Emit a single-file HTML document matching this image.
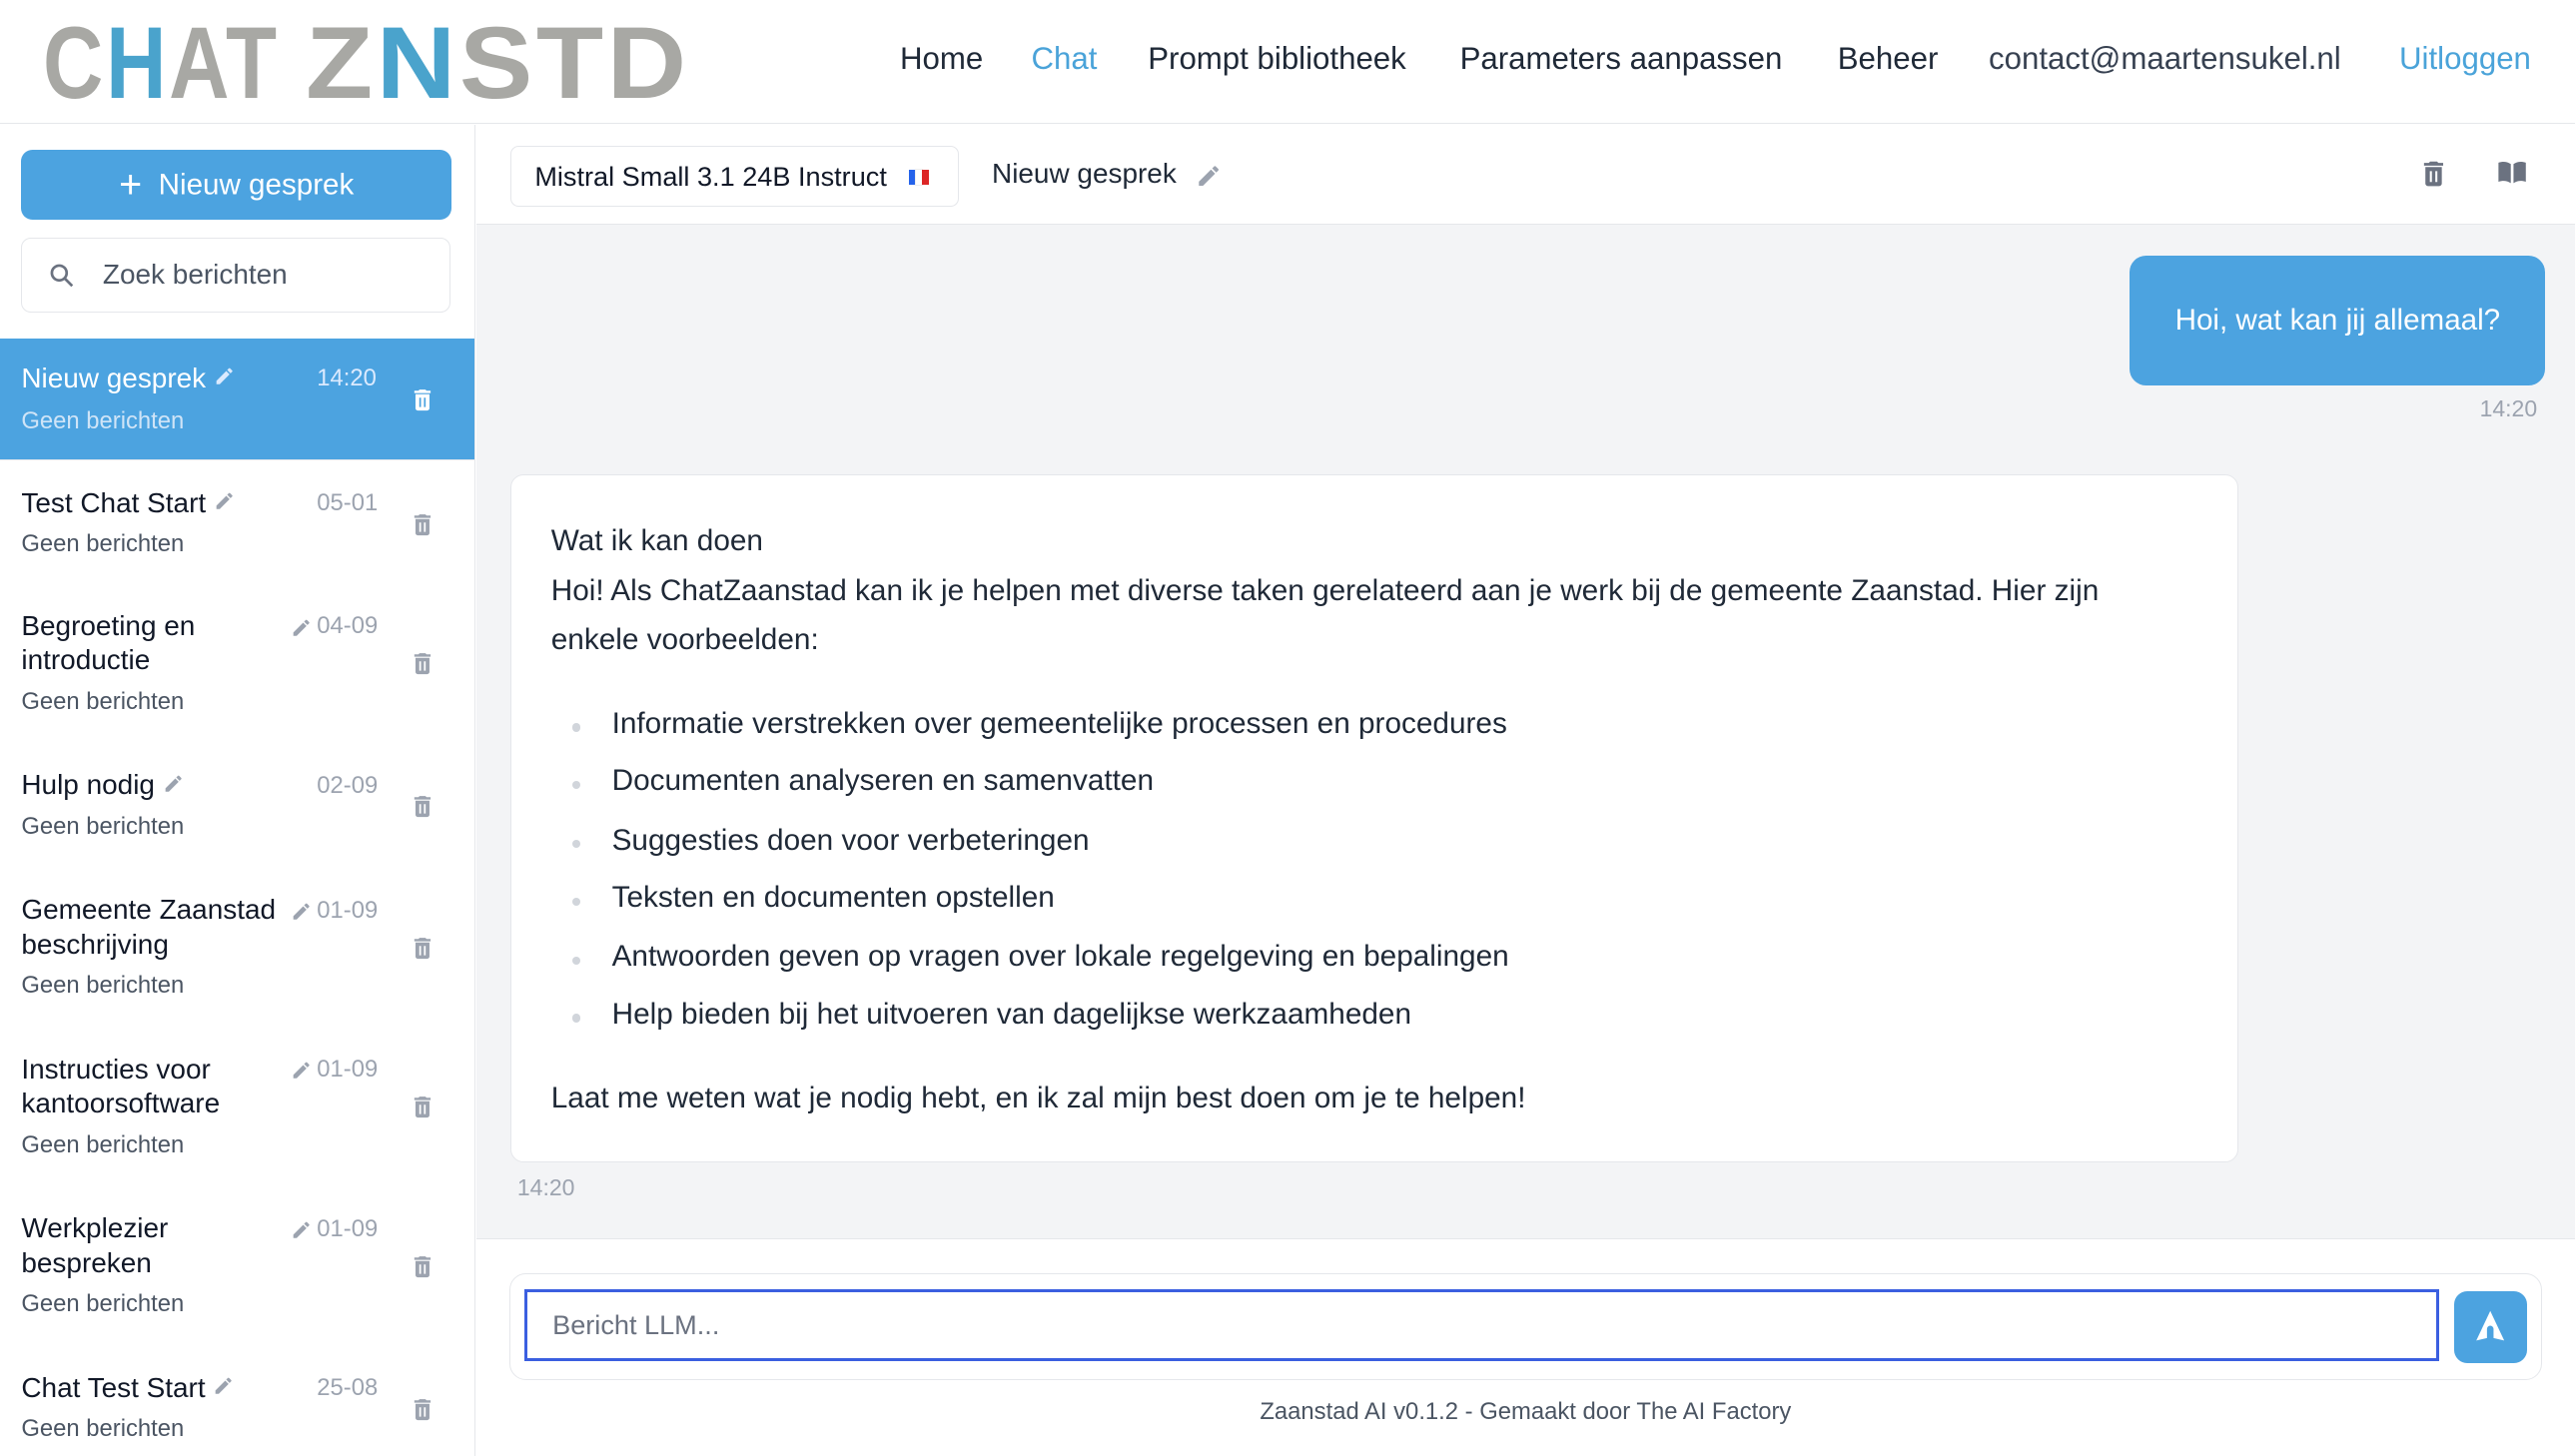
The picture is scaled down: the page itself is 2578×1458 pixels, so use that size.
<!DOCTYPE html>
<html><head><meta charset="utf-8"><style>
html,body{margin:0;padding:0;width:2578px;height:1458px;overflow:hidden;background:#fff}
#w{zoom:1.6441;width:1568px;height:887px;position:relative;font-family:"Liberation Sans",sans-serif;color:#1f2937;overflow:hidden}
.hdr{position:absolute;left:0;top:0;width:1568px;height:75px;border-bottom:1px solid #e5e7eb;background:#fff}
.logo{position:absolute;left:26px;top:3px;font-weight:bold;font-size:62px;letter-spacing:2px;color:#a8a8a4;white-space:nowrap}
.logo .b{color:#4aa3cc}
.nav{position:absolute;top:25px;font-size:19px;color:#1f2937;white-space:nowrap}
.side{position:absolute;left:0;top:76px;width:289px;height:811px;border-right:1px solid #e5e7eb;background:#fff}
.btn{position:absolute;left:13px;top:15px;width:262px;height:43px;background:#4ca3e0;border-radius:7px;color:#fff;font-size:18px;text-align:center;line-height:43px}
.srch{position:absolute;left:13px;top:69px;width:260px;height:44px;border:1px solid #e5e7eb;border-radius:6px;font-size:17px;color:#4b5563;line-height:44px}
.it{position:absolute;left:0;width:289px;border-bottom:1px solid #e5e7eb;background:#fff}
.it .t{position:absolute;left:13px;top:15px;font-size:17px;line-height:21px;color:#111827;width:168px}
.it .d{position:absolute;left:193px;top:17px;font-size:14.5px;color:#9ca3af}
.it .g{position:absolute;left:13px;font-size:14.5px;color:#4b5563}
.act{background:#4ca3e0}.act .t{color:#fff}.act .d{color:#dbeafe}.act .g{color:#cfe4f7}
.main{position:absolute;left:290px;top:76px;width:1278px;height:811px;background:#f3f4f6}
.bar{position:absolute;left:0;top:0;width:1278px;height:60px;background:#fff;border-bottom:1px solid #e5e7eb}
.model{position:absolute;left:21px;top:13px;width:272px;height:36px;border:1px solid #e5e7eb;border-radius:5px;font-size:16.5px;line-height:36px;color:#111827}
.ub{position:absolute;right:18px;top:80px;width:253px;height:79px;background:#4ca3e0;border-radius:10px;color:#fff;font-size:18px;text-align:center;line-height:79px}
.ab{position:absolute;left:21px;top:213px;width:1051px;height:418px;background:#fff;border:1px solid #e5e7eb;border-radius:8px;font-size:18.1px;color:#1f2937}
.ab p{margin:0;position:absolute;left:24px;white-space:nowrap}
.ab li{position:absolute;left:61px;white-space:nowrap}
.ab li:before{content:"";position:absolute;left:-24px;top:10px;width:5px;height:5px;border-radius:50%;background:#d1d5db}
.foot{position:absolute;left:0;top:678px;width:1278px;height:133px;background:#fff;border-top:1px solid #e5e7eb}
.ib{position:absolute;left:20px;top:21px;width:1237px;height:64px;border:1px solid #e5e7eb;border-radius:10px}
.inp{position:absolute;left:9px;top:9px;width:1147px;height:40px;border:2px solid #3b5fe0;font-size:16.5px;color:#6b7280;line-height:40px;padding-left:15px}
.send{position:absolute;left:1184px;top:10px;width:44px;height:44px;background:#4ca3e0;border-radius:8px}
</style></head><body><div id="w">
<div class="hdr">
<div class="logo"><span style="display:inline-block;transform:scaleX(.82);transform-origin:left;width:146px">C<span class="b">H</span>AT</span><span style="margin-left:14px;display:inline-block;transform:scaleX(1.08);transform-origin:left">Z<span class="b">N</span>STD</span></div>
<span class="nav" style="left:548px">Home</span>
<span class="nav" style="left:628px;color:#4aa3d9">Chat</span>
<span class="nav" style="left:699px">Prompt bibliotheek</span>
<span class="nav" style="left:889px">Parameters aanpassen</span>
<span class="nav" style="left:1119px">Beheer</span>
<span class="nav" style="left:1211px;color:#374151">contact@maartensukel.nl</span>
<span class="nav" style="left:1461px;color:#4aa3d9">Uitloggen</span>
</div>
<div class="side">
<div class="btn"><span style="font-size:24px;vertical-align:-2px;margin-right:10px">+</span>Nieuw gesprek</div>
<div class="srch"><svg width="18" height="18" viewBox="0 0 24 24" style="position:absolute;left:15px;top:13px"><circle cx="10" cy="10" r="6" fill="none" stroke="#6b7280" stroke-width="2.2"/><path d="M14.5 14.5l6 6" stroke="#6b7280" stroke-width="2.2"/></svg><span style="position:absolute;left:49px">Zoek berichten</span></div>
</div>
<div id="items"></div>
<div class="main">
<div class="bar">
<div class="model"><span style="margin-left:14px">Mistral Small 3.1 24B Instruct</span><span style="position:absolute;left:242px;top:14px;width:4px;height:9px;background:#2563eb"></span><span style="position:absolute;left:246px;top:14px;width:4px;height:9px;background:#fff;outline:1px solid #eee"></span><span style="position:absolute;left:250px;top:14px;width:4px;height:9px;background:#dc2626"></span></div>
<span style="position:absolute;left:314px;top:20px;font-size:17px;color:#1f2937">Nieuw gesprek</span>
<svg width="16" height="16" viewBox="0 0 24 24" style="position:absolute;left:438px;top:23px"><path d="M3 17.25V21h3.75L17.8 9.94l-3.75-3.75L3 17.25zM20.7 7.04a1 1 0 000-1.41l-2.34-2.34a1 1 0 00-1.41 0l-1.83 1.83 3.75 3.75 1.83-1.83z" fill="#9ca3af"/></svg>
<svg width="20" height="22" viewBox="0 0 24 24" style="position:absolute;left:1182px;top:19px"><path d="M6 19c0 1.1.9 2 2 2h8c1.1 0 2-.9 2-2V7H6v12zM19 4h-3.5l-1-1h-5l-1 1H5v2h14V4z" fill="#6b7280"/><path d="M10 10v8M14 10v8" stroke="#fff" stroke-width="1.5"/></svg>
<svg width="22" height="20" viewBox="0 0 24 24" style="position:absolute;left:1229px;top:19px"><path d="M2 5c3-1 6-1 9 1v14c-3-2-6-2-9-1V5zM22 5c-3-1-6-1-9 1v14c3-2 6-2 9-1V5z" fill="#6b7280"/></svg>
</div>
<div class="ub">Hoi, wat kan jij allemaal?</div>
<span style="position:absolute;right:23px;top:165px;font-size:14px;color:#9ca3af">14:20</span>
<div class="ab">
<p style="top:30px">Wat ik kan doen</p>
<p style="top:60px">Hoi! Als ChatZaanstad kan ik je helpen met diverse taken gerelateerd aan je werk bij de gemeente Zaanstad. Hier zijn</p>
<p style="top:90px">enkele voorbeelden:</p>
<ul style="margin:0;padding:0;list-style:none">
<li style="top:141px">Informatie verstrekken over gemeentelijke processen en procedures</li>
<li style="top:176px">Documenten analyseren en samenvatten</li>
<li style="top:212px">Suggesties doen voor verbeteringen</li>
<li style="top:247px">Teksten en documenten opstellen</li>
<li style="top:283px">Antwoorden geven op vragen over lokale regelgeving en bepalingen</li>
<li style="top:318px">Help bieden bij het uitvoeren van dagelijkse werkzaamheden</li>
</ul>
<p style="top:369px">Laat me weten wat je nodig hebt, en ik zal mijn best doen om je te helpen!</p>
</div>
<span style="position:absolute;left:25px;top:639px;font-size:14px;color:#9ca3af">14:20</span>
<div class="foot">
<div class="ib"><div class="inp">Bericht LLM...</div>
<div class="send"><svg width="44" height="44" viewBox="0 0 44 44"><path d="M22 12l-8.5 18 6.5-1.5v-5.5a2 2 0 014 0v5.5l6.5 1.5z" fill="#fff"/></svg></div></div>
<div style="position:absolute;left:0;width:1278px;top:97px;text-align:center;font-size:14.5px;color:#4b5563">Zaanstad AI v0.1.2 - Gemaakt door The AI Factory</div>
</div>
</div>
<div class="side" style="top:206px;height:0;border:0;background:none">
<div class="it act" style="top:0;height:74px"><div class="t" style="top:14px">Nieuw gesprek <svg width="13" height="13" viewBox="0 0 24 24"><path d="M3 17.25V21h3.75L17.8 9.94l-3.75-3.75zM20.7 7.04a1 1 0 000-1.41l-2.34-2.34a1 1 0 00-1.41 0l-1.83 1.83 3.75 3.75z" fill="#dbeafe"/></svg></div><div class="d" style="top:16px">14:20</div><div class="g" style="top:42px">Geen berichten</div><svg style="position:absolute;left:249px;top:28px" width="17" height="19" viewBox="0 0 24 24"><path d="M6 19c0 1.1.9 2 2 2h8c1.1 0 2-.9 2-2V7H6v12zM19 4h-3.5l-1-1h-5l-1 1H5v2h14V4z" fill="#fff"/><path d="M10 10v8M14 10v8" stroke="#4ca3e0" stroke-width="1.5"/></svg></div>
</div>
<script>
var d=[["Test Chat Start","05-01",75,1],["Begroeting en introductie","04-09",97,2],["Hulp nodig","02-09",76,1],["Gemeente Zaanstad beschrijving","01-09",97,2],["Instructies voor kantoorsoftware","01-09",97,2],["Werkplezier bespreken","01-09",97,2],["Chat Test Start","25-08",70,1]];
var y=281,h="",pen='<svg width="13" height="13" viewBox="0 0 24 24"><path d="M3 17.25V21h3.75L17.8 9.94l-3.75-3.75zM20.7 7.04a1 1 0 000-1.41l-2.34-2.34a1 1 0 00-1.41 0l-1.83 1.83 3.75 3.75z" fill="#9ca3af"/></svg>';
var tr='<svg width="17" height="19" viewBox="0 0 24 24"><path d="M6 19c0 1.1.9 2 2 2h8c1.1 0 2-.9 2-2V7H6v12zM19 4h-3.5l-1-1h-5l-1 1H5v2h14V4z" fill="#9ca3af"/><path d="M10 10v8M14 10v8" stroke="#fff" stroke-width="1.5"/></svg>';
d.forEach(function(r){
var two=r[3]==2;
h+='<div class="it" style="top:'+y+'px;height:'+r[2]+'px"><div class="t">'+r[0]+(two?'':' '+pen)+'</div>'+(two?'<span style="position:absolute;left:177px;top:18px">'+pen+'</span>':'')+'<div class="d">'+r[1]+'</div><div class="g" style="top:'+(two?63:42)+'px">'+'Geen berichten</div><span style="position:absolute;left:249px;top:'+(two?39:29)+'px">'+tr+'</span></div>';
y+=r[2];});
document.getElementById('items').innerHTML=h;
</script>
</div></body></html>
